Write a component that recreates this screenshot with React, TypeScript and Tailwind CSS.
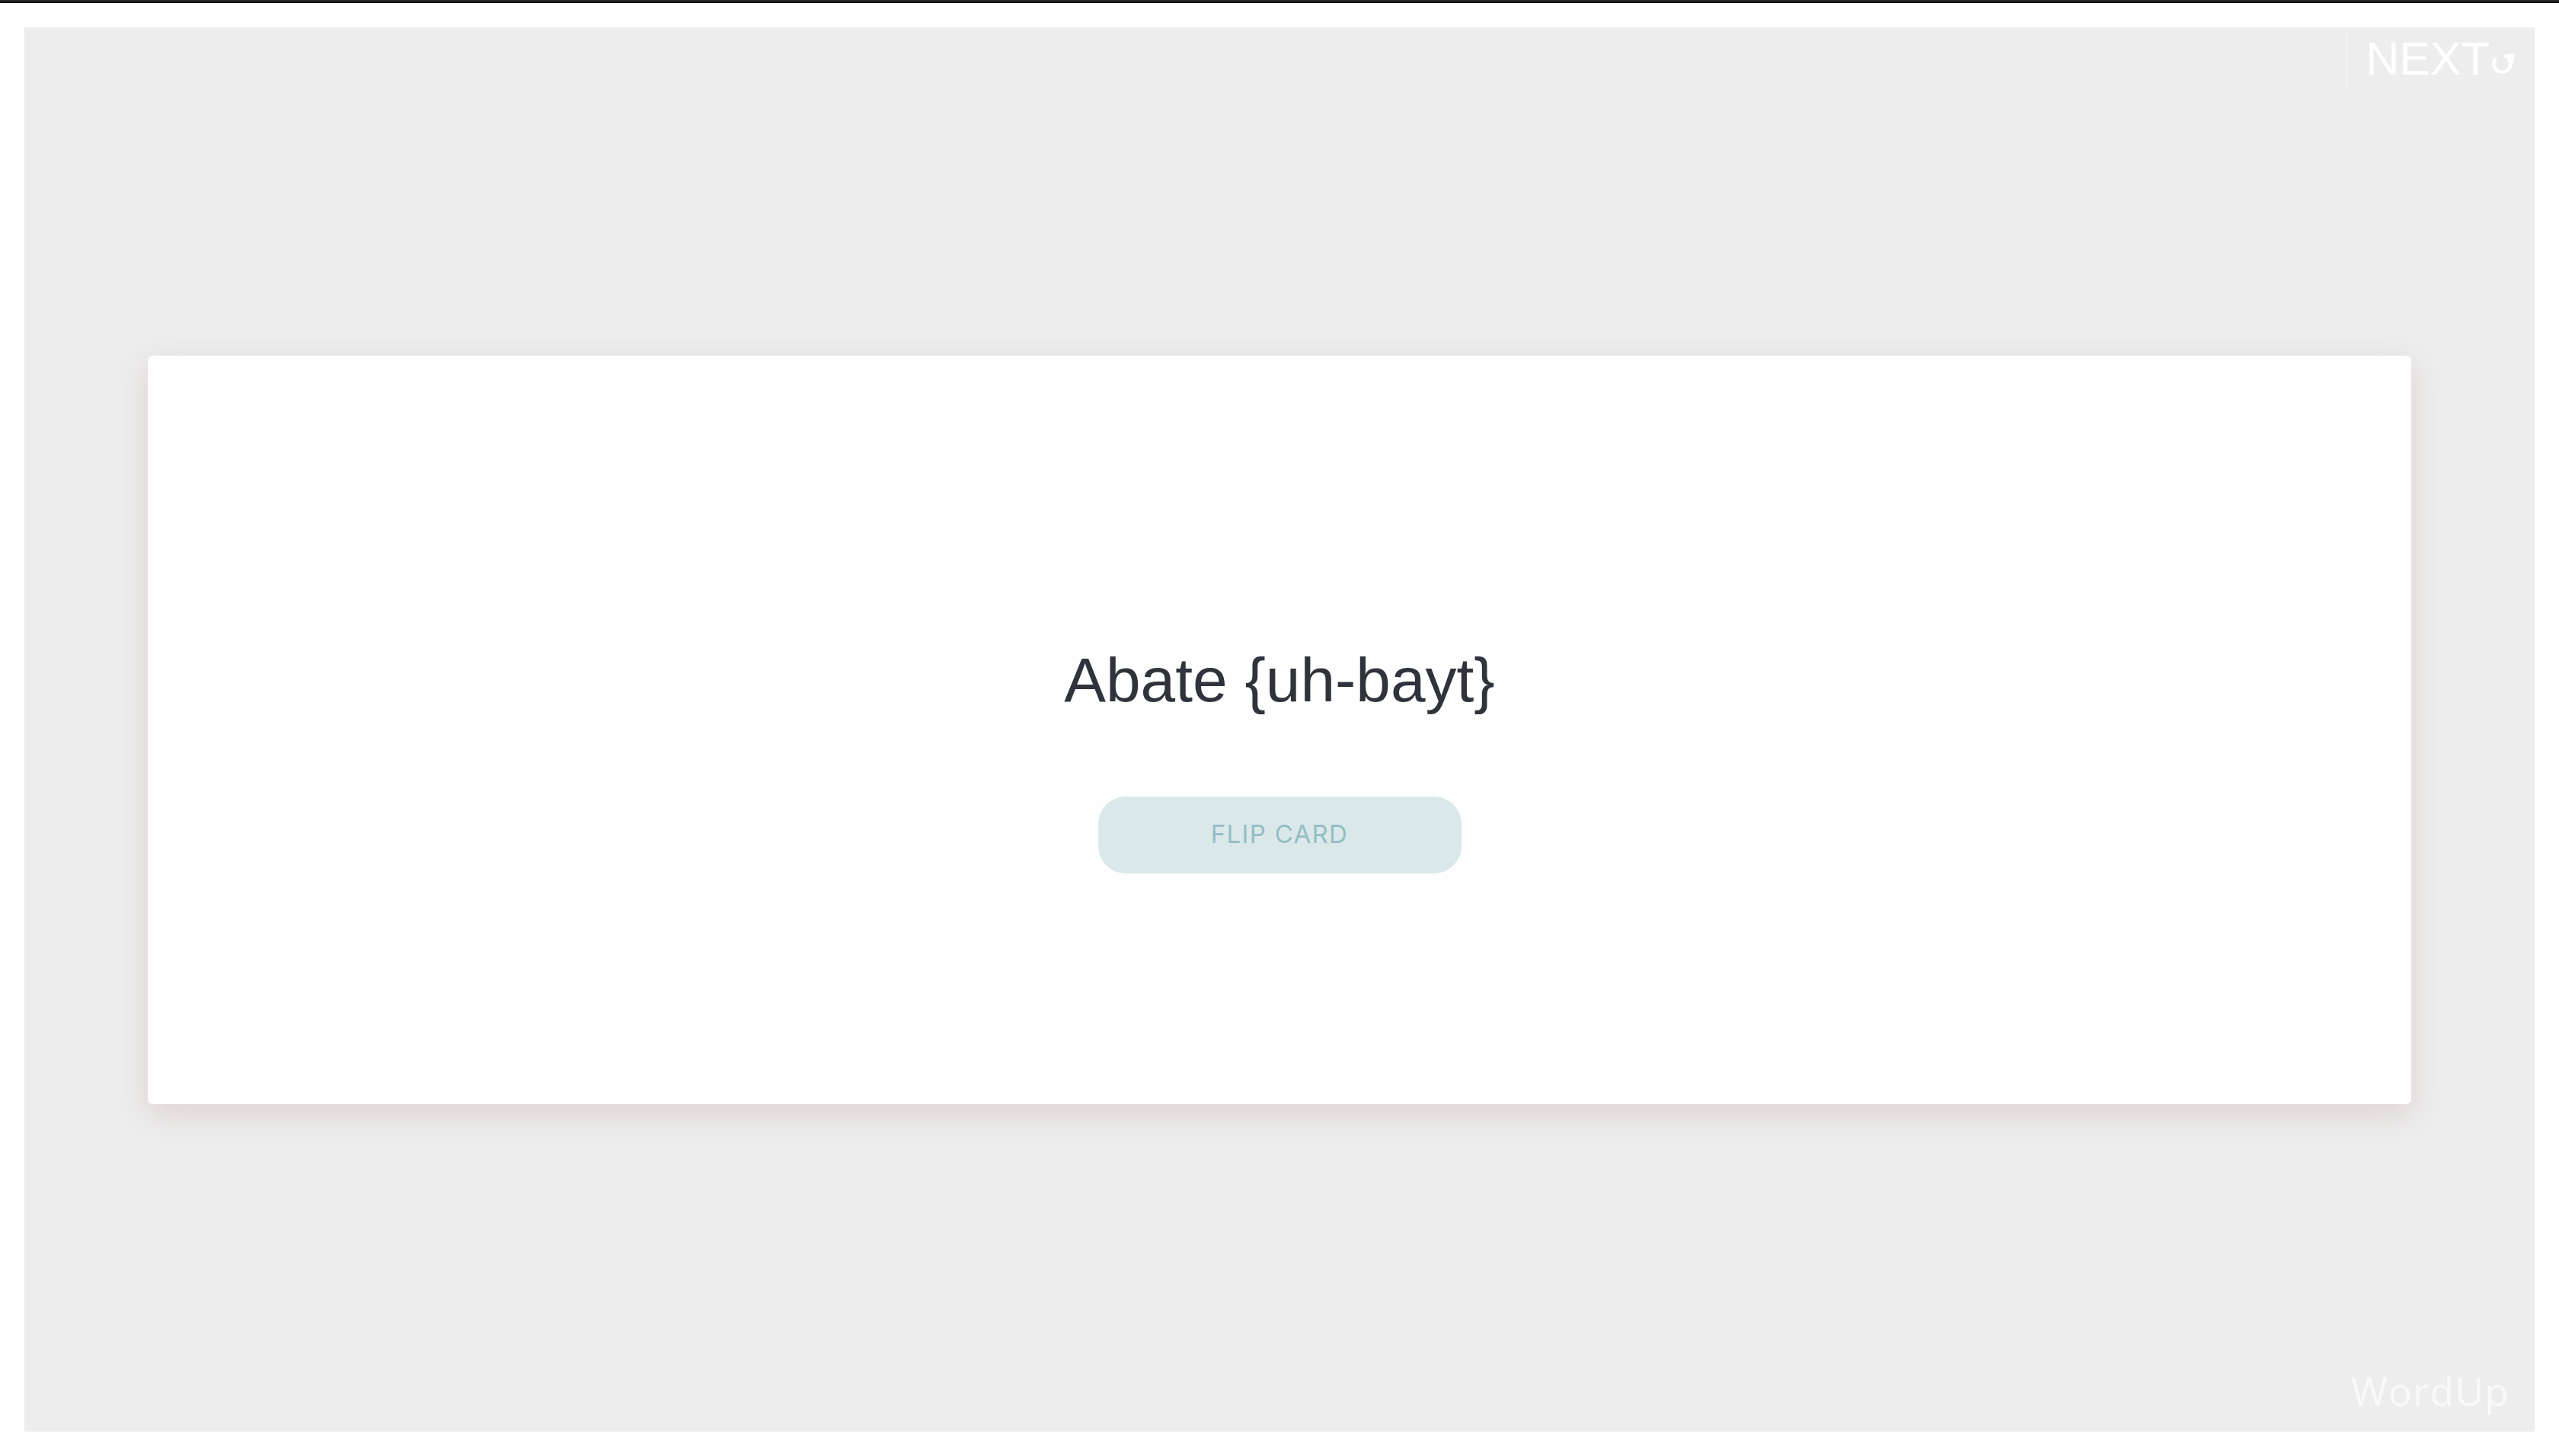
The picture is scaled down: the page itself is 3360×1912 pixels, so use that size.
export default function App() {
  return (
    <div className="min-h-[1912px] bg-white flex flex-col">
      {/* window edge */}
      <div className="h-[2px] bg-[#2b2b2b]" />
      <div className="h-[2px] bg-[#111111]" />

      <div className="px-8 pt-8 pb-8">
        <div className="relative h-[1844px] bg-[#ededed] flex items-center">
          {/* next button */}
          <button className="absolute top-0 right-0 h-[81px] flex items-center pl-[24px] pr-[25px] border-l-2 border-[#f3f3f3] text-white">
            <span className="font-['Liberation_Sans',Arial,sans-serif] text-[61px] leading-none mt-[2px]">
              NEXT
            </span>
            <svg width="34" height="30" viewBox="0 0 34 30" className="mt-[14px]">
              <path
                d="M 7 9 A 11 11 0 1 0 25 8"
                fill="none"
                stroke="#ffffff"
                strokeWidth="4.5"
                strokeLinecap="round"
              />
              <path
                d="M 21 5 L 31 3 L 29 13"
                fill="none"
                stroke="#ffffff"
                strokeWidth="4"
                strokeLinecap="round"
                strokeLinejoin="round"
              />
            </svg>
          </button>

          {/* card */}
          <div className="mx-[162px] w-full h-[983px] bg-[#fefefe] rounded-[7px] shadow-[0_12px_40px_rgba(180,120,120,0.24)] flex flex-col items-center pt-[377px]">
            <h1 className="font-['Liberation_Sans',Helvetica,Arial,sans-serif] text-[82px] leading-[97px] text-[#30333b] font-normal">
              Abate {'{'}uh-bayt{'}'}
            </h1>
            <button className="mt-[105px] w-[477px] h-[101px] rounded-[36px] bg-[#dbe8e9] text-[#93bec3] font-['Inter',sans-serif] text-[33px] tracking-[0.04em]">
              FLIP CARD
            </button>
          </div>

          {/* brand */}
          <div className="absolute right-[33px] bottom-[28px] font-['Open_Sans',sans-serif] text-[52px] leading-none text-[#f9f9f9] tracking-[0.02em]">
            WordUp
          </div>
        </div>
      </div>
    </div>
  );
}
